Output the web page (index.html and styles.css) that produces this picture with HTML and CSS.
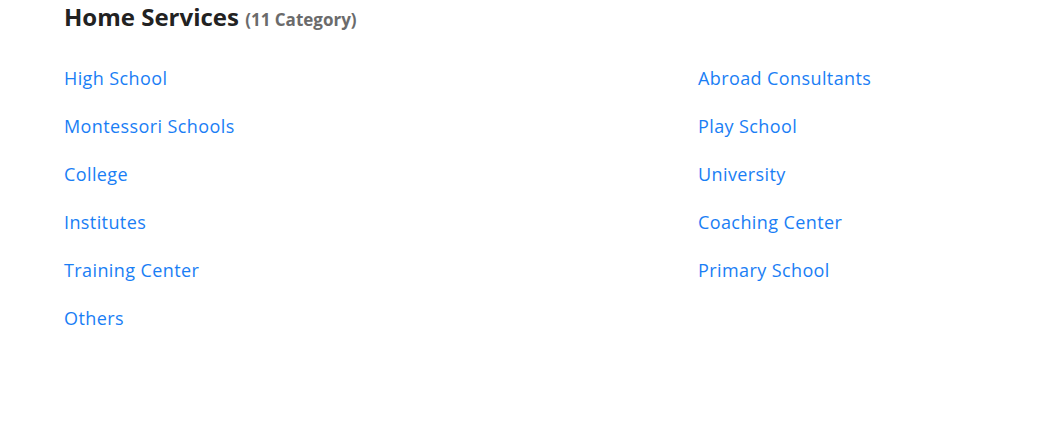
FILE: index.html
```html
<!DOCTYPE html>
<html>
<head>
<meta charset="utf-8">
<link rel="stylesheet" href="styles.css">
</head>
<body>
<section class="services">
  <h2 class="title">Home Services <span class="count">(11 Category)</span></h2>
  <div class="grid">
    <ul class="col">
      <li><a href="#">High School</a></li>
      <li><a href="#">Montessori Schools</a></li>
      <li><a href="#">College</a></li>
      <li><a href="#">Institutes</a></li>
      <li><a href="#">Training Center</a></li>
      <li><a href="#">Others</a></li>
    </ul>
    <ul class="col">
      <li><a href="#">Abroad Consultants</a></li>
      <li><a href="#">Play School</a></li>
      <li><a href="#">University</a></li>
      <li><a href="#">Coaching Center</a></li>
      <li><a href="#">Primary School</a></li>
    </ul>
  </div>
</section>
</body>
</html>
```
FILE: styles.css
```css
html, body {
  margin: 0;
  padding: 0;
  background: #fff;
}
body {
  font-family: "Open Sans", "Liberation Sans", sans-serif;
}
.services {
  padding: 2px 0 0 64px;
}
.title {
  margin: 0;
  font-size: 24px;
  font-weight: 700;
  color: #222222;
  line-height: 30px;
}
.count {
  font-size: 17px;
  color: #6b6b6b;
}
.grid {
  display: grid;
  grid-template-columns: 634px 1fr;
  margin-top: 31px;
}
.col {
  list-style: none;
  margin: 0;
  padding: 0;
  display: flex;
  flex-direction: column;
  gap: 24px;
}
.col li {
  font-size: 18px;
  line-height: 24px;
  height: 24px;
  letter-spacing: 0.4px;
}
.col a {
  color: #1a7ef5;
  text-decoration: none;
}
```
